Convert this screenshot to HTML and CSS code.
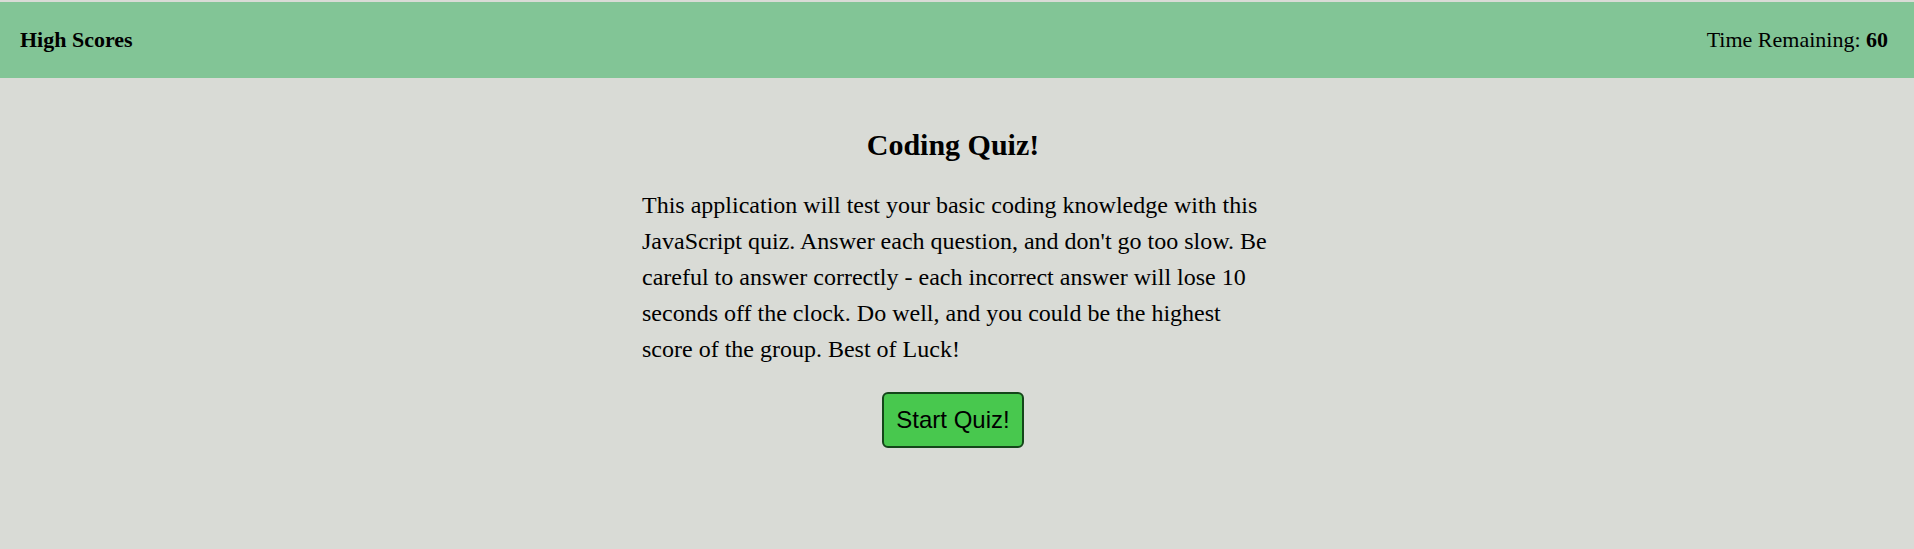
FILE: index.html
```html
<!DOCTYPE html>
<html lang="en">
<head>
<meta charset="utf-8">
<title>Coding Quiz</title>
<link rel="stylesheet" href="styles.css">
</head>
<body>
  <header class="topbar">
    <a class="highscores">High Scores</a>
    <div class="timer">Time Remaining: <strong>60</strong></div>
  </header>
  <main class="intro">
    <h1 class="title">Coding Quiz!</h1>
    <p class="desc">This application will test your basic coding knowledge with this JavaScript quiz. Answer each question, and don't go too slow. Be careful to answer correctly - each incorrect answer will lose 10 seconds off the clock. Do well, and you could be the highest score of the group. Best of Luck!</p>
    <button class="start">Start Quiz!</button>
  </main>
</body>
</html>
```
FILE: styles.css
```css
html, body {
  margin: 0;
  padding: 0;
}
body {
  background: #d9dbd6;
  font-family: "Liberation Serif", "Times New Roman", serif;
  color: #000;
  padding-top: 2px;
  min-height: 547px;
}
.topbar {
  height: 76px;
  background: #82c596;
  display: flex;
  align-items: center;
  justify-content: space-between;
  padding: 0 26px 0 20px;
  font-size: 22px;
}
.highscores {
  font-weight: bold;
}
.intro {
  width: 622px;
  padding-right: 8px;
  margin: 0 auto;
  display: flex;
  flex-direction: column;
  align-items: center;
}
.title {
  font-size: 30px;
  font-weight: bold;
  margin: 50px 0 0;
  line-height: 34px;
}
.desc {
  font-size: 24px;
  line-height: 36px;
  margin: 25px -8px 0 0;
  align-self: stretch;
}
.start {
  margin-top: 25px;
  font-family: "Liberation Sans", Arial, sans-serif;
  font-size: 24px;
  padding: 12px 12px;
  background: #48c84e;
  border: 2px solid #14461a;
  border-radius: 6px;
  color: #000;
}
```
